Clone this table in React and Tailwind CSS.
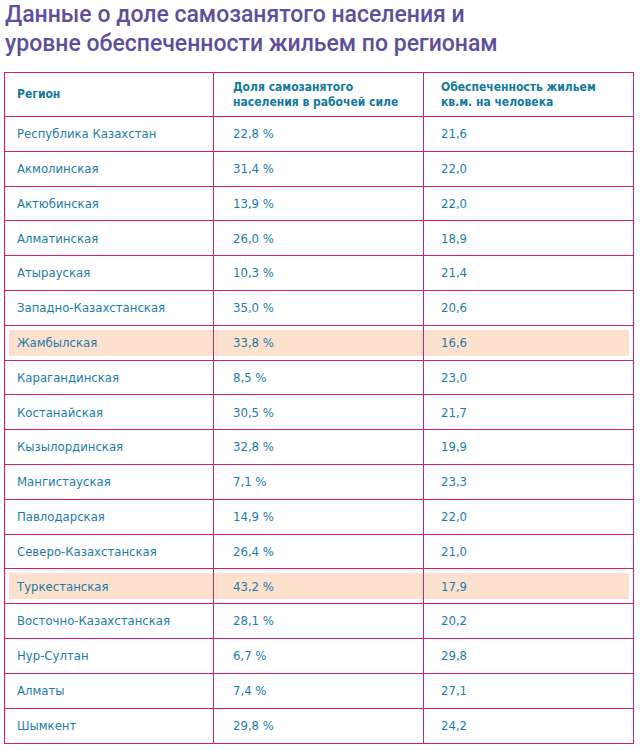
import React from 'react';

const rows = [
    ['Республика Казахстан', '22,8 %', '21,6'],
    ['Акмолинская', '31,4 %', '22,0'],
    ['Актюбинская', '13,9 %', '22,0'],
    ['Алматинская', '26,0 %', '18,9'],
    ['Атырауская', '10,3 %', '21,4'],
    ['Западно-Казахстанская', '35,0 %', '20,6'],
    ['Жамбылская', '33,8 %', '16,6', true],
    ['Карагандинская', '8,5 %', '23,0'],
    ['Костанайская', '30,5 %', '21,7'],
    ['Кызылординская', '32,8 %', '19,9'],
    ['Мангистауская', '7,1 %', '23,3'],
    ['Павлодарская', '14,9 %', '22,0'],
    ['Северо-Казахстанская', '26,4 %', '21,0'],
    ['Туркестанская', '43,2 %', '17,9', true],
    ['Восточно-Казахстанская', '28,1 %', '20,2'],
    ['Нур-Султан', '6,7 %', '29,8'],
    ['Алматы', '7,4 %', '27,1'],
    ['Шымкент', '29,8 %', '24,2'],
];

const App = () => {
    return (
        <div className="w-[641px] h-[751px] bg-white overflow-hidden">
            <h1 className="pl-[5px] text-[23px] leading-[29px] font-medium text-[#5d4f9c] font-['Roboto',sans-serif]">
                Данные о доле самозанятого населения и<br />
                уровне обеспеченности жильем по регионам
            </h1>

            <div className="ml-[4px] mt-[14px] w-[630px] border-[1.5px] border-[#d41f68] font-['DejaVu_Sans_Condensed',sans-serif]">
                <div className="grid grid-cols-[209px_210px_1fr] h-[44px] border-b-[1.5px] border-[#d41f68] text-[12px] leading-[15px] font-bold text-[#13799c]">
                    <div className="flex items-center pl-[12px] border-r-[1.5px] border-[#d41f68]">Регион</div>
                    <div className="flex flex-col justify-center pl-[19px] border-r-[1.5px] border-[#d41f68]">
                        <span>Доля самозанятого</span>
                        <span>населения в рабочей силе</span>
                    </div>
                    <div className="flex flex-col justify-center pl-[17px]">
                        <span>Обеспеченность жильем</span>
                        <span>кв.м. на человека</span>
                    </div>
                </div>

                {rows.map(([region, share, housing, hl], i) => (
                    <div
                        key={region}
                        className={`relative grid grid-cols-[209px_210px_1fr] h-[34.8px] text-[13px] text-[#1d7ca6] ${i < rows.length - 1 ? 'border-b-[1.5px] border-[#d41f68]' : ''}`}
                    >
                        {hl && <div className="absolute inset-[4px] bg-[#fce1cf]"></div>}
                        <div className="relative flex items-center pl-[12px] border-r-[1.5px] border-[#d41f68]">{region}</div>
                        <div className="relative flex items-center pl-[19px] border-r-[1.5px] border-[#d41f68]">{share}</div>
                        <div className="relative flex items-center pl-[17px]">{housing}</div>
                    </div>
                ))}
            </div>
        </div>
    );
};

export default App;
